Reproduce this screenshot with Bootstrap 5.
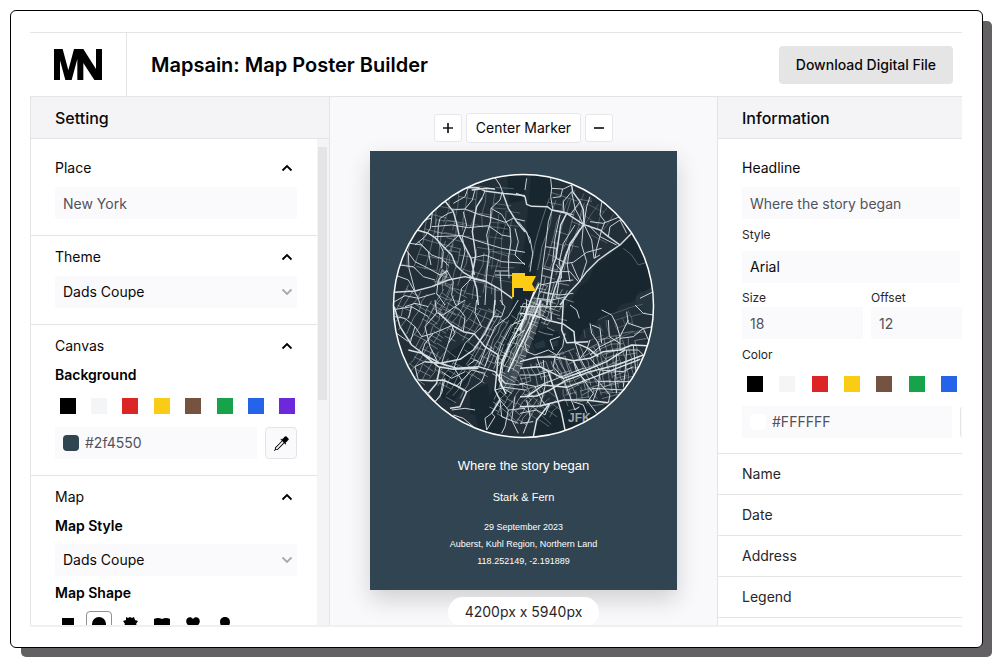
<!DOCTYPE html>
<html lang="en">
<head>
<meta charset="utf-8">
<meta name="viewport" content="width=device-width, initial-scale=1">
<title>Mapsain: Map Poster Builder</title>
<link href="https://cdn.jsdelivr.net/npm/bootstrap@5.3.0/dist/css/bootstrap.min.css" rel="stylesheet">
<style>
:root { --line: #e4e4e7; --soft: #fafafc; --bar: #f4f4f6; --ink: #09090b; --muted: #52525b; }
body { font-family: Inter, "Liberation Sans", sans-serif; font-size: 14px; line-height: 24px; color: var(--ink); background: #fff; padding: 10px 9px 9px 10px; }
.frame { height: calc(100vh - 19px); border: 1px solid #000; border-radius: 6px; box-shadow: 10px 10px 0 -1px #636163; padding: 21px 20px 20px 19px; background: #fff; }
.app { border-top: 1px solid var(--line); border-bottom: 2px solid #f0f0f2; }
.top { height: 63px; border-bottom: 1px solid var(--line); box-sizing: content-box; }
.brand { width: 97px; border-right: 1px solid var(--line); }
.top h1 { font-size: 20px; font-weight: 600; line-height: 28px; color: #000; }
.btn-file { height: 38px; background: #e5e5e5; font-size: 14px; font-weight: 500; border: 0; border-radius: 4px; padding: 0 17px; margin-right: 9px; color: var(--ink); }
.side { width: 300px; border-left: 1px solid var(--line); border-right: 1px solid var(--line); }
.info { width: 245px; border-left: 1px solid var(--line); }
.side-head { height: 42px; background: var(--bar); border-bottom: 1px solid var(--line); font-size: 16px; font-weight: 500; padding: 0 24px; }
.scroller { padding-top: 8px; }
.track { width: 12px; background: #f4f4f6; padding: 8px 2px 0 1px; }
.thumb { height: 53%; background: #e4e4e7; }
.sect { padding: 9px 20px 16px 24px; border-bottom: 1px solid var(--line); }
.fold { display: flex; width: 100%; justify-content: space-between; align-items: center; background: none; border: 0; padding: 0 4px 0 0; color: var(--ink); line-height: 24px; text-align: left; }
.subhead { font-size: 14px; font-weight: 600; line-height: 24px; margin: 5px 0 0; color: #000; }
.field, .pick { display: block; width: 100%; height: 32px; background-color: var(--soft); border: 0; border-radius: 2px; padding: 0 8px; font-size: 14px; color: var(--muted); }
.pick { color: var(--ink); appearance: none; }
.pickwrap { display: grid; margin-top: 7px; align-items: center; }
.subhead + .pickwrap { margin-top: 6px; }
.pickwrap > * { grid-area: 1 / 1; }
.pickwrap svg { justify-self: end; margin-right: 4px; pointer-events: none; }
.mt7 { margin-top: 7px; }
.swatches { display: grid; grid-template-columns: repeat(8, 1fr); justify-items: center; margin: 11px -6px 13px -3px; }
.swatch { width: 16px; height: 16px; border: 0; padding: 0; }
.c-black { background: #000; } .c-white { background: #f3f5f7; } .c-red { background: #dc2626; } .c-gold { background: #facc15; }
.c-brown { background: #765341; } .c-green { background: #16a34a; } .c-blue { background: #2563eb; } .c-violet { background: #6d28d9; }
.hexbox { height: 32px; background: var(--soft); padding-left: 8px; gap: 6px; }
.hexbox input { border: 0; background: none; min-width: 0; width: 100%; padding: 0; font-size: 14px; color: var(--muted); }
.chip { width: 16px; height: 16px; border-radius: 4px; flex: none; }
.chip-slate { background: #2f4550; } .chip-white { background: #fff; }
.tool { width: 32px; height: 32px; border: 1px solid var(--line); border-radius: 4px; background: var(--soft); flex: none; padding: 0; display: flex; align-items: center; justify-content: center; }
.shapes { display: grid; grid-template-columns: repeat(8, 1fr); justify-items: center; margin: 6px -6px 0 -3px; }
.shape { width: 26px; height: 26px; border: 1px solid transparent; border-radius: 4px; padding: 4px; background: none; display: flex; }
.shape.on { border-color: #8f8f96; }
.stage { background: #f9f9fc; padding-top: 16px; }
.ctl { height: 28px; min-width: 28px; background: #fff; border: 1px solid #e8e6ea; border-radius: 3px; padding: 0; display: flex; align-items: center; justify-content: center; color: var(--ink); }
.ctl-wide { height: 30px; padding: 0 9px; font-size: 14px; }
.poster { width: 307px; height: 439px; background: #304551; margin-top: 8px; padding-top: 22px; flex: none; box-shadow: 0 10px 22px rgba(0,0,0,.16); color: #fff; font-family: "Liberation Sans", Arial, sans-serif; text-align: center; }
.poster h2 { font-size: 13px; line-height: 20px; margin: 17px 0 0; font-weight: 400; }
.poster h3 { font-size: 11px; line-height: 16px; margin: 13px 0 0; font-weight: 400; }
.poster p { font-size: 9px; line-height: 17px; margin: 0; }
.poster h3 + p { margin-top: 14px; }
.size { height: 30px; border-radius: 15px; background: #fff; padding: 0 17px; margin-top: 7px; line-height: 30px; flex: none; color: #27272a; }
.info-body { padding: 17px 2px 15px 24px; border-bottom: 1px solid var(--line); }
.tiny { display: block; font-size: 12px; line-height: 18px; margin-top: 7px; color: #27272a; }
.half { width: 121px; flex: none; }
.half .tiny { margin-top: 6px; }
.info .hexbox { width: 210px; flex: none; }
.info .swatches { display: flex; justify-content: space-between; margin: 12px 3px 14px 5px; }
.row-btn { display: block; width: 100%; height: 41px; background: none; border: 0; border-bottom: 1px solid var(--line); padding: 0 24px; text-align: left; color: #27272a; }
.arterial { stroke-width: 2.8; }
.highway { stroke-width: 4.4; }
</style>
</head>
<body>
<div class="frame">
<div class="app d-flex flex-column h-100 overflow-hidden">
  <header class="top d-flex align-items-center flex-shrink-0">
    <div class="brand h-100 d-flex align-items-center justify-content-center">
      <svg width="48" height="31" viewBox="0 0 144 93" role="img" aria-label="MN"><path d="M0 0H26L43 64 60 0H88L126 60V0H144V93H121L88 42V93H70V30L53 93H34L18 34V93H0z"/></svg>
    </div>
    <h1 class="mb-0 ms-4">Mapsain: Map Poster Builder</h1>
    <button type="button" class="btn-file ms-auto">Download Digital File</button>
  </header>
  <div class="d-flex flex-grow-1 overflow-hidden">
    <aside class="side d-flex flex-column flex-shrink-0 overflow-hidden">
      <div class="side-head d-flex align-items-center flex-shrink-0">Setting</div>
      <div class="d-flex flex-grow-1 overflow-hidden">
        <div class="scroller flex-grow-1">
          <section class="sect">
            <button type="button" class="fold">Place <svg width="12" height="8" viewBox="0 0 12 8" fill="none" stroke="#000" stroke-width="1.800"><path d="M1.500 6.500 6 2l4.500 4.500"/></svg></button>
            <input class="field mt7" type="text" aria-label="Place" value="New York">
          </section>
          <section class="sect">
            <button type="button" class="fold">Theme <svg width="12" height="8" viewBox="0 0 12 8" fill="none" stroke="#000" stroke-width="1.800"><path d="M1.500 6.500 6 2l4.500 4.500"/></svg></button>
            <div class="pickwrap"><select class="pick" aria-label="Theme"><option>Dads Coupe</option></select><svg width="12" height="8" viewBox="0 0 12 8" fill="none" stroke="#a8a8ae" stroke-width="1.800"><path d="M1.500 1.500 6 6l4.500-4.500"/></svg></div>
          </section>
          <section class="sect">
            <button type="button" class="fold">Canvas <svg width="12" height="8" viewBox="0 0 12 8" fill="none" stroke="#000" stroke-width="1.800"><path d="M1.500 6.500 6 2l4.500 4.500"/></svg></button>
            <h2 class="subhead">Background</h2>
            <div class="swatches">
              <button type="button" class="swatch c-black" aria-label="Black"></button><button type="button" class="swatch c-white" aria-label="White"></button><button type="button" class="swatch c-red" aria-label="Red"></button><button type="button" class="swatch c-gold" aria-label="Yellow"></button><button type="button" class="swatch c-brown" aria-label="Brown"></button><button type="button" class="swatch c-green" aria-label="Green"></button><button type="button" class="swatch c-blue" aria-label="Blue"></button><button type="button" class="swatch c-violet" aria-label="Violet"></button>
            </div>
            <div class="d-flex gap-2">
              <div class="hexbox d-flex align-items-center flex-grow-1"><span class="chip chip-slate"></span><input type="text" aria-label="Background colour" value="#2f4550"></div>
              <button type="button" class="tool" aria-label="Pick colour"><svg width="15" height="15" viewBox="0 0 16 16"><path d="M13.354.646a1.207 1.207 0 0 0-1.708 0L8.500 3.793l-.646-.647a.5.5 0 1 0-.708.708L8.293 5l-7.147 7.146A.5.5 0 0 0 1 12.500v1.793l-.854.853a.5.5 0 1 0 .708.707L1.707 15H3.500a.5.5 0 0 0 .354-.146L11 7.707l1.146 1.147a.5.5 0 0 0 .708-.708l-.647-.646 3.147-3.146a1.207 1.207 0 0 0 0-1.708l-2-2zM2 12.707l7-7L10.293 7l-7 7H2v-1.293z"/></svg></button>
            </div>
          </section>
          <section class="sect">
            <button type="button" class="fold">Map <svg width="12" height="8" viewBox="0 0 12 8" fill="none" stroke="#000" stroke-width="1.800"><path d="M1.500 6.500 6 2l4.500 4.500"/></svg></button>
            <h2 class="subhead">Map Style</h2>
            <div class="pickwrap"><select class="pick" aria-label="Map Style"><option>Dads Coupe</option></select><svg width="12" height="8" viewBox="0 0 12 8" fill="none" stroke="#a8a8ae" stroke-width="1.800"><path d="M1.500 1.500 6 6l4.500-4.500"/></svg></div>
            <h2 class="subhead">Map Shape</h2>
            <div class="shapes">
              <button type="button" class="shape" aria-label="Rectangle"><svg width="16" height="16"><path d="M2 2h12v12H2z"/></svg></button>
              <button type="button" class="shape on" aria-label="Circle"><svg width="16" height="16"><circle cx="8" cy="8" r="7"/></svg></button>
              <button type="button" class="shape" aria-label="Splash"><svg width="16" height="16"><path d="M4 1l2 1 2-1 2 1 2-1 1 3 3 1-2 3 2 3-3 1-1 3-3-1-3 1-1-3-4-1 2-3-2-3 3-1z"/></svg></button>
              <button type="button" class="shape" aria-label="Open book"><svg width="16" height="16"><path d="M0 3q4-2 8 0 4-2 8 0v11H0z"/></svg></button>
              <button type="button" class="shape" aria-label="Heart"><svg width="16" height="16"><path d="M8 3C11-1 17 3 14 8l-6 6-6-6C-1 3 5-1 8 3z"/></svg></button>
              <button type="button" class="shape" aria-label="Pin"><svg width="16" height="16"><path d="M8 1c6 0 6 7 3 10l-3 4-3-4C2 8 2 1 8 1z"/></svg></button>
            </div>
          </section>
        </div>
        <div class="track flex-shrink-0"><div class="thumb"></div></div>
      </div>
    </aside>

    <main class="stage d-flex flex-column align-items-center flex-grow-1 overflow-hidden">
      <div class="d-flex gap-1 align-items-center">
        <button type="button" class="ctl" aria-label="Zoom in"><svg width="12" height="12" stroke="#18181b" stroke-width="1.700"><path d="M6 1v10M1 6h10"/></svg></button>
        <button type="button" class="ctl ctl-wide">Center Marker</button>
        <button type="button" class="ctl" aria-label="Zoom out"><svg width="12" height="12" stroke="#18181b" stroke-width="1.700"><path d="M1 6h10"/></svg></button>
      </div>
      <article class="poster">
        <svg class="d-block mx-auto" width="263" height="266" viewBox="392 173 263 266" fill="none" role="img" aria-label="Map of New York">
          <defs><clipPath id="disc"><ellipse cx="523.500" cy="306" rx="130" ry="131.500"/></clipPath></defs>
          <g clip-path="url(#disc)">
            <rect x="392" y="173" width="263" height="266" fill="#222f39"/>
            <g fill="#17262f">
              <path d="M531 176l22 0-2 26-4 30-8 22-7 40-12 40-9 44-6 50-14 12-12-6-4-22 14-14 10-24 6-40 10-42 10-50z"/>
              <path d="M564 310l10-14 6-10 8-5 6-14 16-12 20-20 24-10v70l-14-4-6 10-14 4-8 12-10-2-8 10-10 4-6 12-8-2-2-12-8-8z"/>
              <path d="M530 336l14-8 14 4 6 14-8 8-20-1z"/>
              <path d="M540 414l22-12 26 4 16 14-30 22-40 0z"/>
              <path d="M450 352l18-12 8 14-6 24-18 26-12-8zM470 390l18-6 4 34-22-4zM500 222l7-2 2 12-8 0z"/>
              <path d="M507 176l20-1-4 26-14 2z"/>
            </g>
            <g fill="#263640"><path d="M636 296l18-10v28l-18-6zM534 344l10-4 2 7-10 2zM550 342l8-2 0 6-7 1z"/></g>
            <g id="streets" stroke="#c6d0d4"></g>
            <path d="M534 296L498 388 512 392 546 306z" fill="#aeb9bb" opacity=".25"/>

            <g transform="translate(385 165) scale(.3333)" stroke="#d5dde0" stroke-linejoin="round">
              <path class="highway" d="M245 68L280 68 300 78 345 84 420 92M260 75L305 70 330 72M180 108L205 140 215 175 222 210 240 245 258 280 268 330M96 195L130 205 150 218 180 250 200 270 212 300 235 322 262 338 300 348 340 370 382 400M28 382L90 378 140 365 190 345 240 335 300 350M292 98L275 125 268 160 262 200 268 240 272 270 262 330 275 370 280 420M352 80L370 130 395 170 420 200"/>
              <path class="arterial" d="M330 38L345 60 352 80 345 105 318 130 316 170 305 210 312 260 305 330 300 420M200 135L240 132 280 148 320 158 360 172 385 160 420 168M96 195L115 165 140 160 142 140M160 182L165 160 190 145 205 140M60 250L90 290 130 310 165 330 190 318M185 315L160 345 155 385 180 420M185 315L205 350 200 390 212 420M75 235L110 240 140 270 172 282 190 302M140 160L136 190 120 215 90 240M160 182L158 225 175 260 170 310M140 185L200 180 250 188 310 182M150 215L230 212 300 235 350 250 420 262M235 140L245 180 232 215 240 260 228 310M375 190L378 230 370 280 372 340M420 300L390 270 400 230 390 190M30 330L70 345 100 400 105 420M40 300L85 305 115 335 150 345M70 262L72 310 90 378M330 330L420 332M330 318L370 318M250 68L240 95 205 115M270 75L262 105 240 132M300 78L292 98M318 130L350 148 375 190M310 182L350 210 378 215M222 210L180 250M258 280L300 270 350 290 420 295M20 415L60 392 100 400 150 385M262 338L230 370 220 420M330 365L330 420M345 320L352 420M100 230L130 260 138 300"/>
              <path stroke-width="6" opacity=".5" d="M172 315l14 14-12 20-15 4z"/>
            </g>
            <g transform="translate(520 165) scale(.3333)" stroke="#d5dde0" stroke-linejoin="round">
              <path class="highway" d="M-12 85L15 95 20 118 35 124 82 125 95 135 140 145 190 178 240 195 265 215 300 240 335 205M155 60L158 80 180 110 190 135 192 178M300 240L270 260 235 285 200 320 178 350 150 380 120 420M140 145L122 180 115 230 108 280 100 300 90 360 80 420M192 178L150 235 130 300 105 370 90 420"/>
              <path class="arterial" d="M92 40L95 70 92 95 98 130 85 170 78 230 70 290 62 360 50 420M95 70L130 72 155 60M155 80L130 110 132 145M155 80L165 130 190 178 172 210 140 260 120 320 110 400M180 110L150 150M210 95L200 125 192 178M245 112L240 150 255 170 245 195 230 250 225 280M192 178L215 225 222 280 240 270M205 180L240 215 290 240M265 215L270 185 300 165 320 205M190 178L185 240 200 290 180 350M108 280L140 295 160 292 200 262 245 250M75 245L110 250 108 280M70 310L110 320 150 320 175 350M62 360L110 350 160 345M60 380L120 390 160 385M10 190L30 220 38 265 30 320M-5 170L20 200 30 235M20 40L15 75M120 150L105 220 98 290M165 180L130 235 118 290 125 340M180 190L150 240 142 300 150 350M98 98L122 95 128 72M50 400L95 405 140 395M108 298L125 320 120 350M360 400L420 370M100 135L130 140 160 150M210 170L250 175 300 155M155 295L170 330 180 350"/>
              <path class="arterial" opacity=".35" d="M310 250L335 270 355 300 380 292"/>
            </g>
            <g transform="translate(385 300) scale(.3333)" stroke="#d9e0e3" stroke-linejoin="round">
              <path class="highway" d="M28 20L45 80 80 135 120 165 165 190 215 205 280 200 330 215 360 250M120 185L165 190 225 178 265 150 300 100 325 50 330 0M160 38L200 75 235 95 268 102 300 140 340 165M100 240L140 242 175 240 215 258 245 275 225 320 195 325M70 150L110 160 160 200 205 208 280 205M340 165L335 220 330 270 345 300 320 340M165 200L155 250 130 280"/>
              <path class="arterial" d="M150 0L155 38 175 45 210 20 240 0M30 50L60 55 90 80 110 110 145 100 205 75M155 38L120 80 135 140 160 190M90 80L75 130M35 100L70 125M235 95L240 50 225 30 210 20M268 102L240 130 215 180 205 210M205 75L190 130 170 190M268 102L290 80 270 40 275 0M215 258L260 210 300 220 290 245 240 280M175 240L165 290 150 305M120 270L150 305 170 280 180 235M345 0L360 20 350 50 325 50M420 55L380 75 350 130 330 190M420 90L380 120 355 190 345 260M360 250L400 255 420 250M330 270L360 262 420 270M345 300L370 330 420 325M320 340L300 355 305 390 330 350 320 340M370 330L360 380 350 400M390 290L380 360 400 400M345 300L350 350 400 370M200 330L240 325 270 330M205 345L235 355 265 380M280 200L300 150 330 80 370 50 400 0M300 200L320 140M290 190L270 180 250 195M60 20L90 10 130 20M80 20L70 55M350 230L350 262 380 280M20 30L80 20 130 50M100 240L90 200 120 185M110 160L120 130 145 100M210 208L230 240 225 260M170 215L200 235 240 215M200 75L210 100 190 130"/>
            </g>
            <g transform="translate(520 300) scale(.3333)" stroke="#dce3e5" stroke-linejoin="round">
              <path class="highway" d="M0 40L40 45 80 60 130 72 162 95 165 128 205 145 235 170 M0 185L50 172 105 170 160 182 210 175 250 155 300 150 335 135 400 138M0 205L60 200 130 235 200 210 260 185 315 150M0 290L50 288 90 270 140 240 210 215 290 195 370 165M0 320L60 318 130 300 200 300 265 308M130 0L128 40 125 90 140 128 205 125M20 290L70 255 140 262 220 232 290 205 360 178M85 215L110 290 125 340 135 390M40 410L50 360 90 310"/>
              <path class="arterial" d="M40 45L30 90 15 130 20 155 45 165 85 150 110 165 128 140 135 100M160 182L185 230 205 260 220 280 200 310M130 235L150 290 165 330 178 320M165 128L180 175 200 210 240 250 270 285 265 308M210 175L240 210 235 260 220 300M210 70L215 100 235 130 240 150M215 75L240 85 245 130M245 30L275 45 290 75 300 110 300 150M265 60L268 110 300 130M320 35L325 70 370 85 400 80M325 60L300 110 240 140 210 165M345 15L370 40 400 45M370 85L390 130M340 135L345 190 350 230M320 150L315 220 310 260M290 160L285 240 290 280M240 210L310 215 340 200M235 245L330 245M215 265L310 270M0 250L50 260 100 240 150 220 190 205M50 172L60 200 85 215M105 170L100 200 130 235M160 182L170 215 200 245M0 340L50 330 75 345 90 310M0 370L40 365M10 400L30 350 20 300M150 15L170 30 178 55M70 180L75 260 60 318M180 175L200 150 210 120M0 225L50 225 100 210M120 110L90 120 100 150M0 20L70 20 128 20M20 0L18 60M60 0L60 60M90 0L95 60M300 150L355 150 370 165M200 300L230 340M45 260L65 300 80 320M370 85L340 110 300 115M160 305L190 315 200 340"/>
            </g>
            <path stroke="#eef2f2" stroke-width="1.500" d="M534 292L524 318 510 344 502 362 499 380 506 394M541 300L530 326 518 350 508 372M539 284L531 300 520 330"/>
            <path stroke="#17262f" stroke-width="2" d="M541 318l-4 14M514 326l-10 22"/>
            <text x="568" y="422" fill="#9aa5aa" font-family="Liberation Sans, sans-serif" font-weight="700" font-size="12">JFK</text>
          </g>
          <path fill="#fccb13" d="M512 273h13v3h11l-4 8 4 7h-13v-3h-9v9h-2z"/>
          <ellipse cx="523.500" cy="306" rx="130" ry="131.500" stroke="#fff" stroke-width="1.500"/>
        </svg>
        <h2>Where the story began</h2>
        <h3>Stark &amp; Fern</h3>
        <p>29 September 2023</p>
        <p>Auberst, Kuhl Region, Northern Land</p>
        <p>118.252149, -2.191889</p>
      </article>
      <div class="size">4200px x 5940px</div>
    </main>

    <aside class="info d-flex flex-column flex-shrink-0 overflow-hidden">
      <div class="side-head d-flex align-items-center flex-shrink-0">Information</div>
      <div class="info-body">
        <label class="d-block" for="headline">Headline</label>
        <input id="headline" class="field mt7" type="text" value="Where the story began">
        <label class="tiny" for="face">Style</label>
        <select id="face" class="pick mt7"><option>Arial</option></select>
        <div class="d-flex gap-2">
          <div class="half"><label class="tiny" for="fsize">Size</label><input id="fsize" class="field" type="text" value="18"></div>
          <div class="half"><label class="tiny" for="foff">Offset</label><input id="foff" class="field" type="text" value="12"></div>
        </div>
        <label class="tiny" for="fcolor">Color</label>
        <div class="swatches">
          <button type="button" class="swatch c-black" aria-label="Black"></button><button type="button" class="swatch c-white" aria-label="White"></button><button type="button" class="swatch c-red" aria-label="Red"></button><button type="button" class="swatch c-gold" aria-label="Yellow"></button><button type="button" class="swatch c-brown" aria-label="Brown"></button><button type="button" class="swatch c-green" aria-label="Green"></button><button type="button" class="swatch c-blue" aria-label="Blue"></button>
        </div>
        <div class="d-flex gap-2">
          <div class="hexbox d-flex align-items-center"><span class="chip chip-white"></span><input id="fcolor" type="text" value="#FFFFFF"></div>
          <button type="button" class="tool" aria-label="Pick text colour"></button>
        </div>
      </div>
      <button type="button" class="row-btn flex-shrink-0">Name</button>
      <button type="button" class="row-btn flex-shrink-0">Date</button>
      <button type="button" class="row-btn flex-shrink-0">Address</button>
      <button type="button" class="row-btn flex-shrink-0">Legend</button>
    </aside>
  </div>
</div>
</div>
<script src="https://cdn.jsdelivr.net/npm/bootstrap@5.3.0/dist/js/bootstrap.bundle.min.js"></script>
<script>
// Local streets: each district is a slightly irregular grid of short blocks.
// [centre x, centre y, width, height, angle, block width, block height, opacity]
const districts = [
  [425, 250, 50, 70, 12, 10, 13, .45], [465, 215, 55, 60, 8, 9, 13, .4], [468, 275, 60, 60, 14, 8, 12, .45],
  [500, 250, 24, 80, 6, 7, 14, .35], [418, 320, 50, 60, 28, 7, 9, .55], [455, 320, 50, 50, 30, 6, 9, .5],
  [440, 372, 60, 45, 32, 6, 8, .5], [490, 345, 22, 70, 28, 4, 7, .6], [556, 240, 36, 90, 16, 7, 12, .45],
  [590, 215, 50, 40, 30, 9, 12, .3], [550, 300, 34, 40, 20, 5, 7, .65], [518, 340, 20, 80, 24, 3, 4, .8],
  [540, 315, 26, 30, 20, 4, 5, .65], [515, 405, 40, 40, 35, 5, 6, .6], [545, 375, 50, 34, -18, 5, 6, .6],
  [585, 370, 50, 50, -24, 6, 6, .6], [622, 365, 40, 60, -8, 6, 7, .55], [610, 328, 50, 24, -20, 8, 8, .3],
  [590, 395, 50, 24, -12, 6, 6, .5], [540, 405, 30, 30, 40, 6, 7, .45]
];
let seed = 11;
const rnd = () => (seed = (seed * 16807) % 2147483647) / 2147483647;
let out = '';
for (const [cx, cy, w, h, a, bw, bh, op] of districts) {
  let d = '';
  const j = n => ((rnd() - .5) * n).toFixed(1) * 1;
  for (let x = -w / 2; x <= w / 2; x += bw) {
    const s = -h / 2 + rnd() * 8, e = h / 2 - rnd() * 12;
    d += `M${x} ${s.toFixed(1)}`;
    for (let y = s + bh; y < e; y += bh) d += `L${(x + j(bw / 2)).toFixed(1)} ${y.toFixed(1)}`;
  }
  for (let y = -h / 2; y <= h / 2; y += bh)
    for (let x = -w / 2; x < w / 2; x += bw * 2)
      if (rnd() > .35) d += `M${x} ${(y + j(3)).toFixed(1)}l${bw * 2} ${j(3)}`;
  out += `<path d="${d}" transform="translate(${cx} ${cy}) rotate(${a})" stroke-width=".8" opacity="${op}"/>`;
}
document.getElementById('streets').innerHTML = out;
</script>
</body>
</html>
